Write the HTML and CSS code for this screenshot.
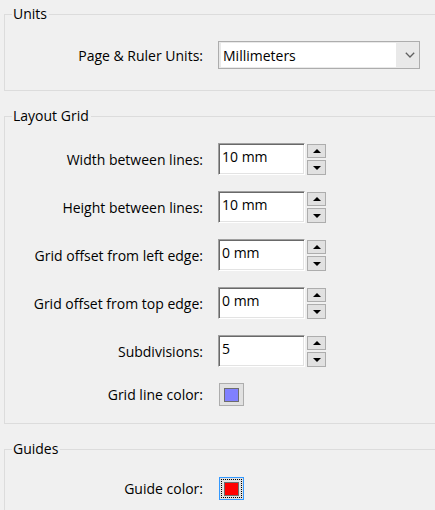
FILE: index.html
```html
<!DOCTYPE html>
<html lang="en">
<head>
    <meta charset="UTF-8">
    <meta name="viewport" content="width=device-width, initial-scale=1.0">
    <title>Grid Settings</title>
    <link rel="stylesheet" href="styles.css">
</head>
<body>
    <fieldset class="group units">
        <legend>Units</legend>
        <div class="row">
            <label>Page &amp; Ruler Units:</label>
            <div class="combo">
                <span class="combo-text">Millimeters</span>
                <svg class="chevron" width="10" height="6" viewBox="0 0 10 6">
                    <path d="M0.8 0.8 L5 5 L9.2 0.8" fill="none" stroke="#606060" stroke-width="1.3"/>
                </svg>
            </div>
        </div>
    </fieldset>

    <fieldset class="group grid">
        <legend>Layout Grid</legend>
        <div class="row">
            <label>Width between lines:</label>
            <div class="spin">
                <div class="edit">10 mm</div>
                <div class="spin-buttons">
                    <div class="spin-btn"><span class="tri up"></span></div>
                    <div class="spin-btn"><span class="tri down"></span></div>
                </div>
            </div>
        </div>
        <div class="row">
            <label>Height between lines:</label>
            <div class="spin">
                <div class="edit">10 mm</div>
                <div class="spin-buttons">
                    <div class="spin-btn"><span class="tri up"></span></div>
                    <div class="spin-btn"><span class="tri down"></span></div>
                </div>
            </div>
        </div>
        <div class="row">
            <label>Grid offset from left edge:</label>
            <div class="spin">
                <div class="edit">0 mm</div>
                <div class="spin-buttons">
                    <div class="spin-btn"><span class="tri up"></span></div>
                    <div class="spin-btn"><span class="tri down"></span></div>
                </div>
            </div>
        </div>
        <div class="row">
            <label>Grid offset from top edge:</label>
            <div class="spin">
                <div class="edit">0 mm</div>
                <div class="spin-buttons">
                    <div class="spin-btn"><span class="tri up"></span></div>
                    <div class="spin-btn"><span class="tri down"></span></div>
                </div>
            </div>
        </div>
        <div class="row">
            <label>Subdivisions:</label>
            <div class="spin">
                <div class="edit">5</div>
                <div class="spin-buttons">
                    <div class="spin-btn"><span class="tri up"></span></div>
                    <div class="spin-btn"><span class="tri down"></span></div>
                </div>
            </div>
        </div>
        <div class="row row-color">
            <label>Grid line color:</label>
            <div class="swatch-btn"><span class="swatch blue"></span></div>
        </div>
    </fieldset>

    <fieldset class="group guides">
        <legend>Guides</legend>
        <div class="row row-color">
            <label>Guide color:</label>
            <div class="swatch-btn focused"><span class="swatch red"></span></div>
        </div>
    </fieldset>
</body>
</html>
```

FILE: styles.css
```css
html {
    height: 100%;
    overflow: hidden;
}
body {
    margin: 0;
    padding-top: 4px;
    background: #f0f0f0;
    font-family: "Open Sans", "Noto Sans", sans-serif;
    font-size: 14px;
    color: #000;
}
.group {
    margin: 0 0 0 4px;
    padding: 0;
    border: 1px solid #dcdcdc;
    border-right: none;
}
.group legend {
    margin-left: 7px;
    padding: 0 2px 0 1px;
    line-height: 20px;
}
.units {
    padding: 17px 0 21px;
}
.grid {
    margin-top: 15px;
    padding: 17px 0 17px;
}
.guides {
    margin-top: 15px;
    padding: 18px 0 20px;
}
.row {
    display: grid;
    grid-template-columns: 198px auto;
    column-gap: 15px;
    align-items: center;
}
.grid .row + .row {
    margin-top: 16px;
}
.grid .row-color {
    margin-top: 17px;
}
.row label {
    text-align: right;
}

/* combo box */
.combo {
    width: 198px;
    height: 26px;
    border: 1px solid #adadad;
    background: #e9e9e9;
    display: flex;
    align-items: center;
    padding-left: 2px;
}
.combo-text {
    width: 173px;
    height: 24px;
    background: #fff;
    padding-left: 2px;
    line-height: 26px;
    overflow: hidden;
}
.chevron {
    margin-left: 9px;
}

/* spin edit */
.spin {
    display: flex;
    gap: 2px;
    align-items: flex-start;
}
.edit {
    width: 82px;
    height: 30px;
    background: #fff;
    border: 1px solid;
    border-color: #a0a0a0 #fff #fff #a0a0a0;
    box-shadow: inset 1px 1px 0 #696969, inset -1px -1px 0 #e3e3e3;
    padding-left: 3px;
    line-height: 25px;
}
.spin-buttons {
    display: flex;
    flex-direction: column;
    gap: 2px;
    margin-top: 1px;
}
.spin-btn {
    width: 17px;
    height: 12px;
    border: 1px solid #adadad;
    background: #e1e1e1;
    display: flex;
    align-items: center;
    justify-content: center;
}
.spin-btn:last-child {
    height: 13px;
}
.tri {
    width: 0;
    height: 0;
    border-left: 4px solid transparent;
    border-right: 4px solid transparent;
}
.tri.up {
    border-bottom: 4px solid #000;
}
.tri.down {
    border-top: 4px solid #000;
}

/* colour buttons */
.swatch-btn {
    width: 23px;
    height: 21px;
    margin-left: 1px;
    border: 1px solid #adadad;
    background: #e1e1e1;
    display: flex;
    align-items: center;
    justify-content: center;
}
.swatch-btn.focused {
    border-color: #3399ff;
    outline: 1px dotted #000;
    outline-offset: -3px;
}
.swatch {
    width: 13px;
    height: 12px;
    border: 1px solid #6d6d6d;
}
.swatch.blue {
    background: #8080ff;
}
.swatch.red {
    background: #ff0000;
}
```
